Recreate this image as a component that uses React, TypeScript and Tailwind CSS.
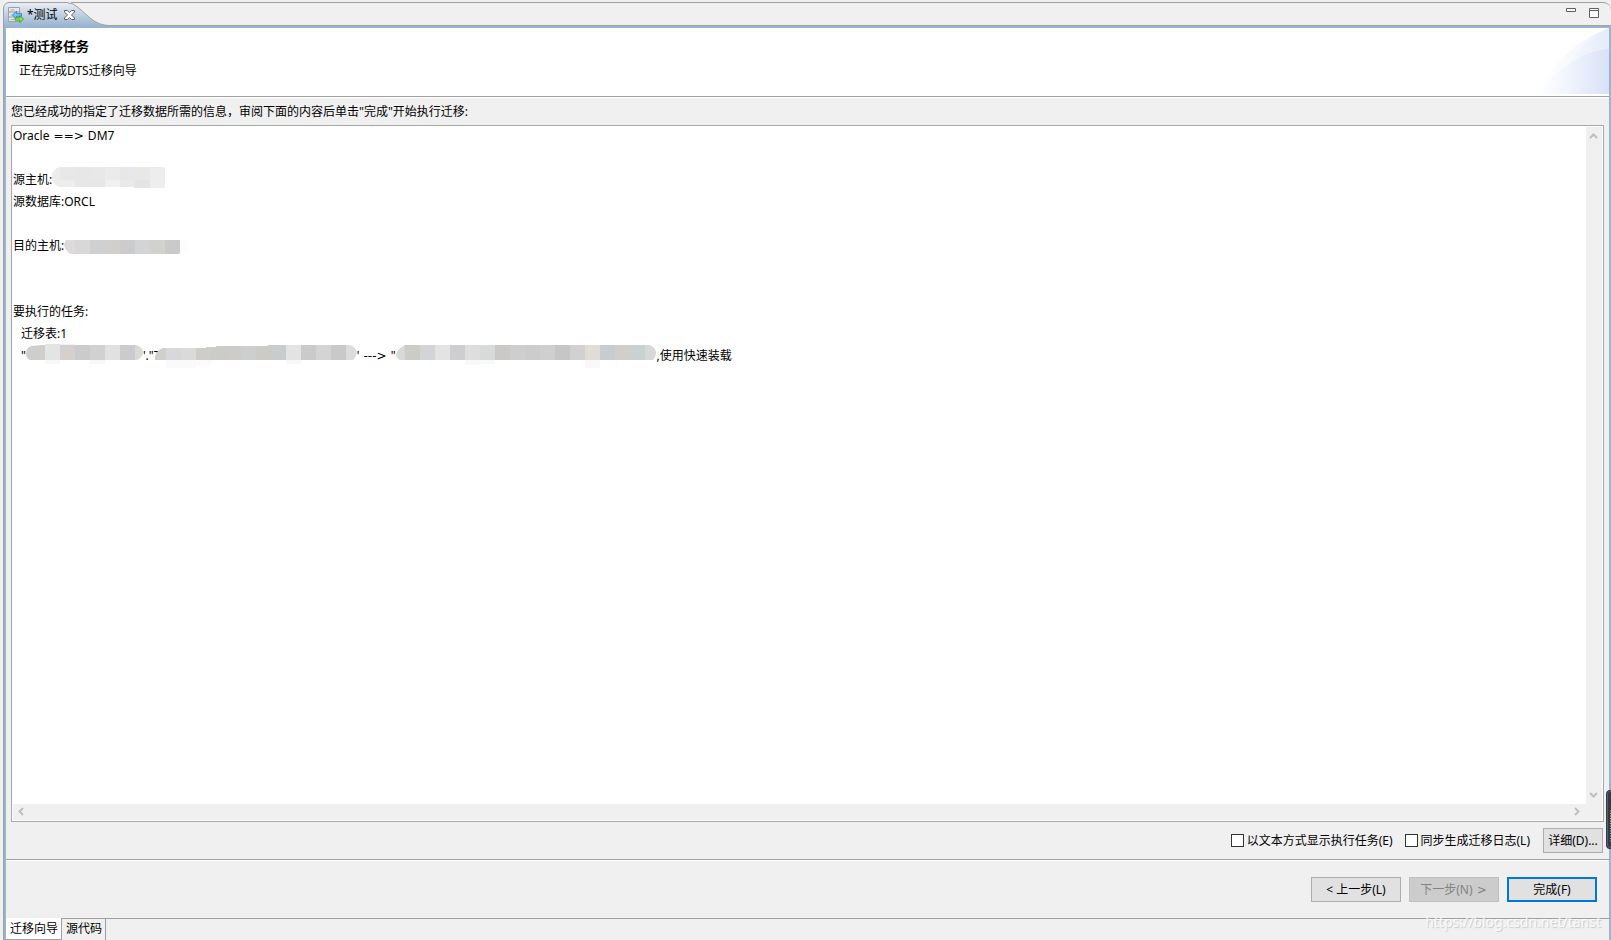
import React from "react";

type Patch = { x: number; y: number; w: number; h: number; c: string };

const row = (first: number, last: number, y: number, h: number, colors: string[]): Patch[] => {
  let x = 0;
  return colors.map((c, i) => {
    const w = i === 0 ? first : i === colors.length - 1 ? last : 15;
    const patch = { x, y, w, h, c };
    x += w;
    return patch;
  });
};

type MosaicProps = {
  id: string;
  width: number;
  outline: string;
  patches: Patch[];
  faint?: Patch[];
  className?: string;
};

function Mosaic({ id, width, outline, patches, faint = [], className = "" }: MosaicProps) {
  const draw = (p: Patch, i: number) => (
    <rect key={i} x={p.x} y={p.y} width={p.w} height={p.h} fill={p.c} shapeRendering="crispEdges" />
  );
  return (
    <svg
      width={width}
      height="22"
      className={`relative shrink-0 self-start overflow-visible ${className}`}
      aria-hidden="true"
    >
      <clipPath id={id}>
        <path d={outline} />
      </clipPath>
      {faint.map(draw)}
      <g clipPath={`url(#${id})`}>{patches.map(draw)}</g>
    </svg>
  );
}

const sourceHost = [
  ...row(8, 15, -3, 13, ["#ececec", "#e8e8e9", "#e7e7e8", "#e8e8e8", "#ebebec", "#e7e7ea", "#e8e8e7", "#eceded"]),
  ...row(8, 15, 10, 8, ["#ececec", "#ededee", "#e7e7e8", "#e7e7e7", "#f0f0f1", "#e9e9ea", "#e4e4e5", "#eeeef0"]),
];
const targetHost = row(11, 15, 4, 14, ["#dcdadb", "#d8d8d8", "#cfd0d2", "#d1cfcc", "#cccccf", "#d3d5d4", "#d1d1ce", "#cacaca"]);
const schemaName = row(19, 8, -2, 16, ["#d0cecd", "#e3e5e4", "#d5d0ce", "#cacbcd", "#d1d1d1", "#e1e1e2", "#cbcbcd", "#d8d9d9"]);
const tableName = row(11, 11, -1, 15, ["#cfcfcd", "#d6d8dc", "#d9dad9", "#cfcdca", "#cbcbca", "#cdcccb", "#cdcfce", "#cdcbc6", "#c8cccd", "#e3e3e3", "#cacaca", "#d3d5d4", "#c9c9c9", "#dcddda"]);
const targetName = row(9, 11, -1, 15, ["#d8d8d8", "#cbccc6", "#d3d4d8", "#e3e3e3", "#cecdd0", "#dddedd", "#d8dad9", "#cac9c7", "#cecece", "#cccccd", "#cfcfcf", "#c5c7c7", "#d1d1d2", "#e0ddd7", "#cacbd1", "#d2cfcb", "#cbd0d1", "#d8d8d8"]);

function Chevron({ d }: { d: string }) {
  return (
    <svg width="16" height="16" viewBox="0 0 16 16" fill="none" stroke="#bfbfbf" strokeWidth="2" aria-hidden="true">
      <path d={d} />
    </svg>
  );
}

function Sym({ children }: { children: React.ReactNode }) {
  return <span className="mx-px font-['DejaVu_Sans',sans-serif]">{children}</span>;
}

function EditorTabs() {
  return (
    <div className="relative flex h-[24px] rounded-tr-[8px] border-t border-b border-[#a0a0a0]">
      <svg className="absolute -top-px left-0" width="110" height="24" aria-hidden="true">
        <defs>
          <linearGradient id="tab" x1="0" y1="0" x2="0" y2="1">
            <stop offset="0" stopColor="#eaeff4" />
            <stop offset="1" stopColor="#99b4d1" />
          </linearGradient>
        </defs>
        <path d="M0 0H110V23H0Z" fill="#f0f0f0" />
        <path d="M68 .5H110" stroke="#a0a0a0" />
        <path d="M.5 24V6Q1 1 6 .5H64Q71 1 77 7L87 16Q96 23.500 106 23.500V24Z" fill="url(#tab)" />
        <path d="M.5 24V6Q1 1 6 .5H64Q71 1 77 7L87 16Q96 23.500 106 23.500H110" fill="none" stroke="#a0a0a0" />
      </svg>
      <div role="tab" aria-selected="true" className="relative flex h-[23px] items-center pl-[5px]">
        <svg width="16" height="16" viewBox="0 0 16 16" aria-hidden="true">
          <path d="M.5.5h11v14H.5z" fill="#e6e8ea" stroke="#9aa1a8" />
          <path d="M1 5h10M1 10h10" stroke="#8f979f" />
          <path d="M2.500 3h4M2.500 8h3M2.500 12.500h4" stroke="#a7adb3" />
          <path d="M4.500 8L8.500 4.300v2.400h5v2.600h-5v2.400z" fill="#7cc6f4" stroke="#2a83c8" strokeWidth=".9" />
          <path d="M15.500 12L11.800 8.500v2.300H7v2.400h4.800v2.300z" fill="#8be154" stroke="#33a12a" strokeWidth=".9" />
        </svg>
        <span className="pl-[3px]">*测试</span>
        <button type="button" aria-label="关闭" className="ml-[6px] flex">
          <svg width="11" height="10" viewBox="0 0 11 10" aria-hidden="true">
            <path d="M.5.5h3l2 2 2-2h3v1.500L7.500 5l3 3v1.500h-3l-2-2-2 2h-3V8l3-3-3-3z" fill="#fff" stroke="#606060" />
          </svg>
        </button>
      </div>
      <div className="ml-auto flex items-start gap-[13px] pt-[5px] pr-3">
        <button type="button" aria-label="最小化">
          <svg className="block" width="10" height="10" aria-hidden="true">
            <path d="M.5.5h9v3h-9z" fill="#fff" stroke="#606060" />
          </svg>
        </button>
        <button type="button" aria-label="最大化">
          <svg className="block" width="10" height="10" aria-hidden="true">
            <path d="M.5.5h9v9h-9zM0 2.500h10" fill="#fff" stroke="#606060" />
          </svg>
        </button>
      </div>
    </div>
  );
}

function WizardHeader() {
  return (
    <header className="relative flex h-[68px] flex-col bg-white">
      <svg className="absolute top-0 right-0" width="75" height="66" viewBox="0 0 75 66" aria-hidden="true">
        <defs>
          <linearGradient id="outer" gradientUnits="userSpaceOnUse" x1="5" y1="0" x2="75" y2="0">
            <stop offset="0" stopColor="#fff" />
            <stop offset="1" stopColor="#eff3fb" />
          </linearGradient>
          <linearGradient id="middle" gradientUnits="userSpaceOnUse" x1="15" y1="0" x2="75" y2="0">
            <stop offset="0" stopColor="#fff" />
            <stop offset="1" stopColor="#e5ebf9" />
          </linearGradient>
          <linearGradient id="inner" gradientUnits="userSpaceOnUse" x1="5" y1="0" x2="75" y2="0">
            <stop offset="0" stopColor="#fff" />
            <stop offset=".4" stopColor="#f1f5fd" />
            <stop offset="1" stopColor="#d9e1f6" />
          </linearGradient>
        </defs>
        <path d="M2 66Q30 16 75 0V66Z" fill="url(#outer)" />
        <path d="M34 38Q50 10 75 0V66H20Z" fill="url(#middle)" />
        <path d="M2 66C20 46 45 23 75 21V66Z" fill="url(#inner)" />
      </svg>
      <h1 className="pt-[9px] pl-[5px] text-[13px] leading-[18px] font-bold">审阅迁移任务</h1>
      <p className="pt-[7px] pl-[13px] leading-[18px]">正在完成DTS迁移向导</p>
    </header>
  );
}

function Line({ children, indent = false }: { children?: React.ReactNode; indent?: boolean }) {
  return (
    <div className={`flex h-[22px] items-center pb-[2px] whitespace-pre ${indent ? "pl-2" : ""}`}>{children}</div>
  );
}

function TaskSummary() {
  return (
    <section className="mx-[5px] grid min-h-0 grow grid-cols-[1fr_16px] grid-rows-[1fr_16px] border border-[#a8a8a8] bg-white px-px pb-px">
      <div className="overflow-hidden">
        <Line>
          {"Oracle "}
          <Sym>{"==>"}</Sym>
          {" DM7"}
        </Line>
        <Line />
        <Line>
          源主机:
          <Mosaic
            id="source-host"
            width={113}
            outline="M8 -3H112L113 -2V17L112 18H82V17H8C-3 14 -3 0 8 -3Z"
            patches={sourceHost}
          />
        </Line>
        <Line>源数据库:ORCL</Line>
        <Line />
        <Line>
          目的主机:
          <Mosaic
            id="target-host"
            width={116}
            outline="M2 4H116V17L115 18H7C3 16 0 12 0 8Z"
            patches={targetHost}
            faint={[{ x: 116, y: 5, w: 7, h: 10, c: "#fbfcfe" }]}
          />
        </Line>
        <Line />
        <Line />
        <Line>要执行的任务:</Line>
        <Line indent>迁移表:1</Line>
        <Line indent>
          {'"'}
          <Mosaic
            id="schema-name"
            width={117}
            outline="M5 0L17 -1H19V-2H34V-1H110Q117 1 117 7Q116 12 111 14H4Q0 12 0 8Q0 2 5 0Z"
            patches={schemaName}
            faint={[
              { x: 34, y: -2, w: 15, h: 2, c: "#f3f1f0" },
              { x: 19, y: 14, w: 15, h: 4, c: "#f8f8f8" },
              { x: 64, y: 14, w: 15, h: 4, c: "#f8f8f8" },
            ]}
          />
          {"'.\"T"}
          <Mosaic
            id="table-name"
            width={202}
            outline="M8 2H51V1H61V0H113V-1H195Q201 1 202 7Q200 13 198 14H0V10Q2 4 8 2Z"
            patches={tableName}
            faint={[
              { x: 11, y: 14, w: 30, h: 8, c: "#fafafa" },
              { x: 41, y: 14, w: 15, h: 6, c: "#fcfcfc" },
              { x: 131, y: 14, w: 15, h: 4, c: "#f8f8f8" },
            ]}
            className="-ml-[6px]"
          />
          {"' "}
          <Sym>{"--->"}</Sym>
          {' "'}
          <Mosaic
            id="target-name"
            width={260}
            outline="M9 -1H254Q260 2 260 7Q260 11 257 14H4Q0 12 0 9Q2 2 9 -1Z"
            patches={targetName}
            faint={[
              { x: 69, y: 14, w: 15, h: 5, c: "#f8f8f8" },
              { x: 84, y: 14, w: 15, h: 4, c: "#f9f9f9" },
              { x: 189, y: 14, w: 15, h: 8, c: "#f9f9f9" },
            ]}
          />
          <span className="pl-px">,使用快速装载</span>
        </Line>
      </div>
      <div className="mt-px flex flex-col justify-between bg-[#f0f0f0]">
        <Chevron d="M4 11l3.500-3.500L11 11" />
        <Chevron d="M4 5l3.500 3.500L11 5" />
      </div>
      <div className="flex justify-between bg-[#f0f0f0]">
        <Chevron d="M10 4L6.500 7.500 10 11" />
        <Chevron d="M5 4l3.500 3.500L5 11" />
      </div>
      <div className="bg-[#f0f0f0]" />
    </section>
  );
}

function CheckOption({ label }: { label: string }) {
  return (
    <label className="flex items-center gap-[3px]">
      <input type="checkbox" className="size-[13px] appearance-none border border-[#333] bg-white checked:bg-[#0078d7]" />
      {label}
    </label>
  );
}

const lights = [
  "#2b3350", "#2b3350", "#2b3350", "#2b3350", "#2b3350", "#d8c53c", "#e2cf3f", "#e4d23c", "#d9d843",
  "#c3d84b", "#a5d957", "#8ad965", "#6fd879", "#5cd690", "#4fd3a3", "#48d0b4", "#45cdc0", "#45cdc8",
];

function SideMeter() {
  return (
    <svg className="absolute right-0 bottom-[91px]" width="5" height="59" aria-hidden="true">
      <path d="M5 0H3Q0 1 0 4V55Q0 58 3 59H5Z" fill="#363a47" />
      <path d="M5 1.500H3.500Q1.500 2 1.500 4V55Q1.500 57 3.500 57.500H5" fill="none" stroke="#5b5f6d" />
      {lights.map((c, i) => (
        <rect key={i} x="4" y={8 + i * 2.5} width="1" height="1" fill={c} />
      ))}
    </svg>
  );
}

const wizardButton = "h-[25px] w-[90px] text-center whitespace-pre";

export default function App() {
  return (
    <div className="relative flex h-screen flex-col overflow-hidden bg-[#f0f0f0] pt-[2px] pl-[3px] font-['Noto_Sans','Noto_Sans_CJK_SC',sans-serif] text-[12px] leading-[18px] text-black">
      <EditorTabs />
      <main className="flex min-h-0 grow flex-col border-l border-[#a0a0a0]">
        <div className="flex min-h-0 grow flex-col border-x-2 border-t-2 border-[#99b4d1]">
          <WizardHeader />
          <div className="border-t border-b border-t-[#a0a0a0] border-b-white" />
          <p className="pt-[5px] pb-1 pl-[5px]">您已经成功的指定了迁移数据所需的信息，审阅下面的内容后单击"完成"开始执行迁移:</p>
          <TaskSummary />
          <div className="flex items-center justify-end py-[6px] pr-[6px]">
            <div className="flex gap-3 pr-[13px]">
              <CheckOption label="以文本方式显示执行任务(E)" />
              <CheckOption label="同步生成迁移日志(L)" />
            </div>
            <button type="button" className="h-[25px] w-[60px] border border-[#adadad] bg-[#e1e1e1] whitespace-nowrap">
              详细(D)...
            </button>
          </div>
          <div className="border-t border-b border-t-[#a0a0a0] border-b-white" />
          <div className="flex justify-end gap-2 py-4 pr-3">
            <button type="button" className={`${wizardButton} border border-[#adadad] bg-[#e1e1e1]`}>
              {"< 上一步(L)"}
            </button>
            <button type="button" disabled className={`${wizardButton} border border-[#bfbfbf] bg-[#cccccc] text-[#838383]`}>
              {"下一步(N) "}
              <Sym>{">"}</Sym>
            </button>
            <button type="button" className={`${wizardButton} border-2 border-[#0078d7] bg-[#e1e1e1]`}>
              完成(F)
            </button>
          </div>
          <nav className="flex h-[22px] border-t border-[#a0a0a0]">
            <button type="button" className="-mt-px border-r border-b border-[#a0a0a0] bg-white pr-[3px] pl-1">
              迁移向导
            </button>
            <button type="button" className="border-r border-[#a0a0a0] pr-[3px] pb-px pl-1">
              源代码
            </button>
          </nav>
        </div>
      </main>
      <SideMeter />
      <div className="absolute right-[10px] bottom-[9px] text-[14px] text-white/80 [text-shadow:1px_1px_1px_#c8c8c8]">
        https://blog.csdn.net/tanst
      </div>
    </div>
  );
}
